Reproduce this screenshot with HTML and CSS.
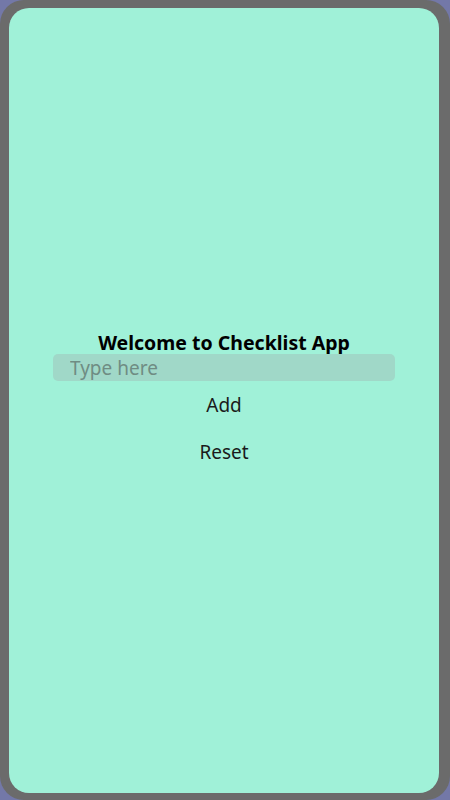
FILE: index.html
```html
<!DOCTYPE html>
<html lang="en">
<head>
  <meta charset="UTF-8" />
  <meta name="viewport" content="width=device-width, initial-scale=1.0" />
  <title>Checklist App</title>
  <link rel="stylesheet" href="styles.css">
</head>
<body>
  <div class="device">
    <div class="screen">
      <div class="app">
        <h1>Welcome to Checklist App</h1>
        <input class="entry" type="text" placeholder="Type here" />
        <button class="action">Add</button>
        <button class="action">Reset</button>
      </div>
    </div>
  </div>
</body>
</html>
```

FILE: styles.css
```css
body {
  margin: 0;
  padding: 0;
  background: #7378a8;
  font-family: 'Noto Sans', 'Open Sans', sans-serif;
}

.device {
  width: 450px;
  height: 800px;
  box-sizing: border-box;
  background: #6b6b6b;
  border-radius: 24px;
  padding: 8px 11px 7px 9px;
}

.screen {
  height: 100%;
  background: #a0f1d8;
  border-radius: 20px;
  display: flex;
  align-items: center;
  justify-content: center;
}

.app {
  display: flex;
  flex-direction: column;
  align-items: center;
  width: 342px;
  padding-top: 6px;
}

h1 {
  margin: 0;
  font-size: 19.5px;
  font-weight: bold;
  color: #000;
  line-height: 22px;
}

.entry {
  width: 100%;
  box-sizing: border-box;
  height: 27px;
  border: none;
  outline: none;
  border-radius: 5px;
  background: #a0d8c8;
  padding: 0 17px;
  font-family: inherit;
  font-size: 19px;
  color: #222;
}

.entry::placeholder {
  color: #6f8c83;
}

.action {
  background: none;
  border: none;
  font-family: inherit;
  font-size: 19px;
  color: #1a1a1a;
  padding: 0;
  margin-top: 1px;
  line-height: 46px;
}
```
